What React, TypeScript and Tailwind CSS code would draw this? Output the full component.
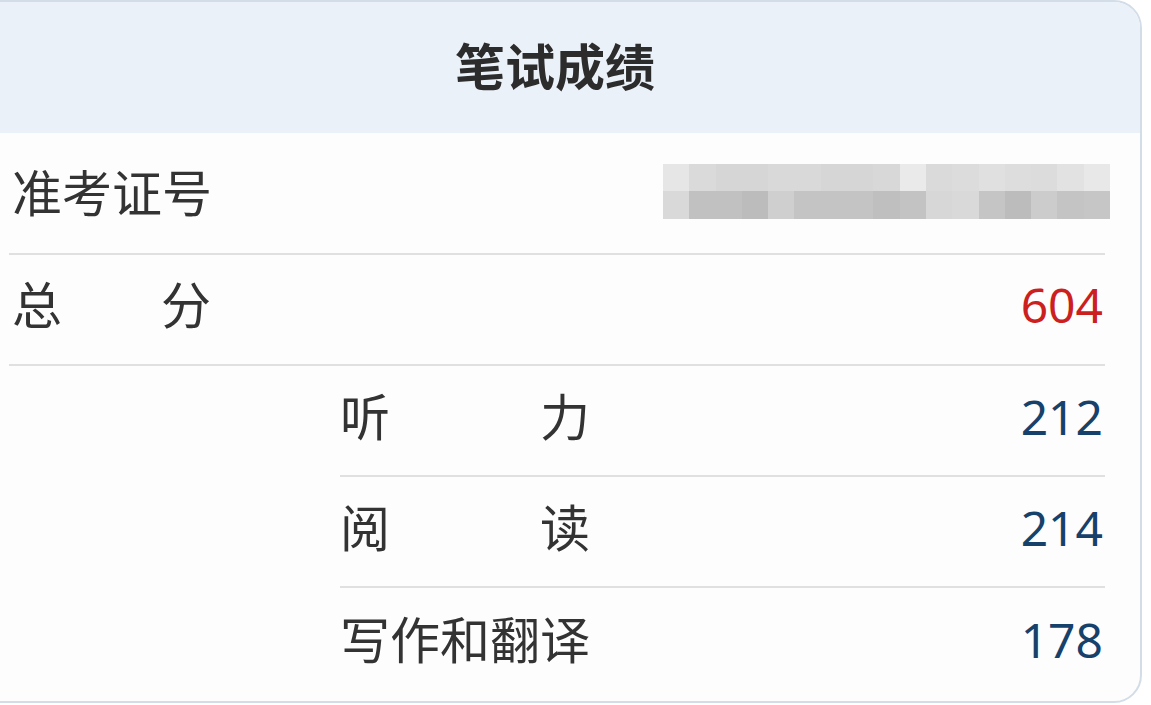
const top = ["#e6e6e6", "#dadada", "#d6d6d6", "#d6d6d6", "#d9d9d9", "#d9d9d9", "#d6d6d6", "#d6d6d6", "#d8d8d8", "#eaeaea", "#dadada", "#dcdcdc", "#e0e0e0", "#dddddd", "#dcdcdc", "#e2e2e2", "#e8e8e8"];
const bottom = ["#d9d9d9", "#c1c1c1", "#c1c1c1", "#bcbcbc", "#cfcfcf", "#c4c4c4", "#c4c4c4", "#c4c4c4", "#bfbfbf", "#c3c3c3", "#d7d7d7", "#d9d9d9", "#c5c5c5", "#bcbcbc", "#cccccc", "#c4c4c4", "#c6c6c6"];

const subScores = [
  { label: ["听", "力"], value: 212 },
  { label: ["阅", "读"], value: 214 },
  { label: ["写作和翻译"], value: 178 },
];

function Blurred() {
  return (
    <div className="flex flex-col">
      {[top, bottom].map((row, i) => (
        <div key={i} className="flex">
          {row.map((c, j) => (
            <div key={j} className="h-[27.5px] w-[26.3px]" style={{ backgroundColor: c }} />
          ))}
        </div>
      ))}
    </div>
  );
}

export default function App() {
  return (
    <div
      className="h-[705px] w-[1151px] overflow-hidden bg-white text-[#333333]"
      style={{ fontFamily: '"Noto Sans", "Noto Sans CJK SC", sans-serif' }}
    >
      <div className="ml-[-30px] h-[703px] w-[1172px] overflow-hidden rounded-[28px] border-2 border-[#d3dde8] bg-[#fdfdfd]">
        <div className="flex h-[131px] items-center justify-center bg-[#ebf1f8]">
          <h1 className="ml-[-2px] text-[50px] font-bold text-[#2c2c2c]">笔试成绩</h1>
        </div>

        <div className="pl-[37px] pr-[35px]">
          <div className="flex h-[122px] items-center justify-between border-b-2 border-[#e0e0e0]">
            <span className="ml-[3px] whitespace-nowrap text-[50px] leading-none">准考证号</span>
            <div className="mr-[-5px] mt-[-4px]">
              <Blurred />
            </div>
          </div>

          <div className="flex h-[111px] items-center justify-between border-b-2 border-[#e0e0e0] pb-[9px]">
            <span className="ml-[3px] flex w-[199px] justify-between text-[50px] leading-none">
              <span>总</span>
              <span>分</span>
            </span>
            <span className="mr-[2px] text-[48px] leading-none text-[#cc1f1f]">604</span>
          </div>

          <div className="ml-[331px]">
            {subScores.map((s, i) => (
              <div
                key={i}
                className={`flex h-[111px] items-center justify-between pb-[8px] ${i < subScores.length - 1 ? "border-b-2 border-[#e0e0e0]" : ""}`}
              >
                <span className="flex w-[250px] shrink-0 justify-between whitespace-nowrap text-[50px] leading-none">
                  {s.label.map((t) => (
                    <span key={t}>{t}</span>
                  ))}
                </span>
                <span className="mr-[2px] text-[48px] leading-none text-[#16416b]">{s.value}</span>
              </div>
            ))}
          </div>
        </div>
      </div>
    </div>
  );
}
